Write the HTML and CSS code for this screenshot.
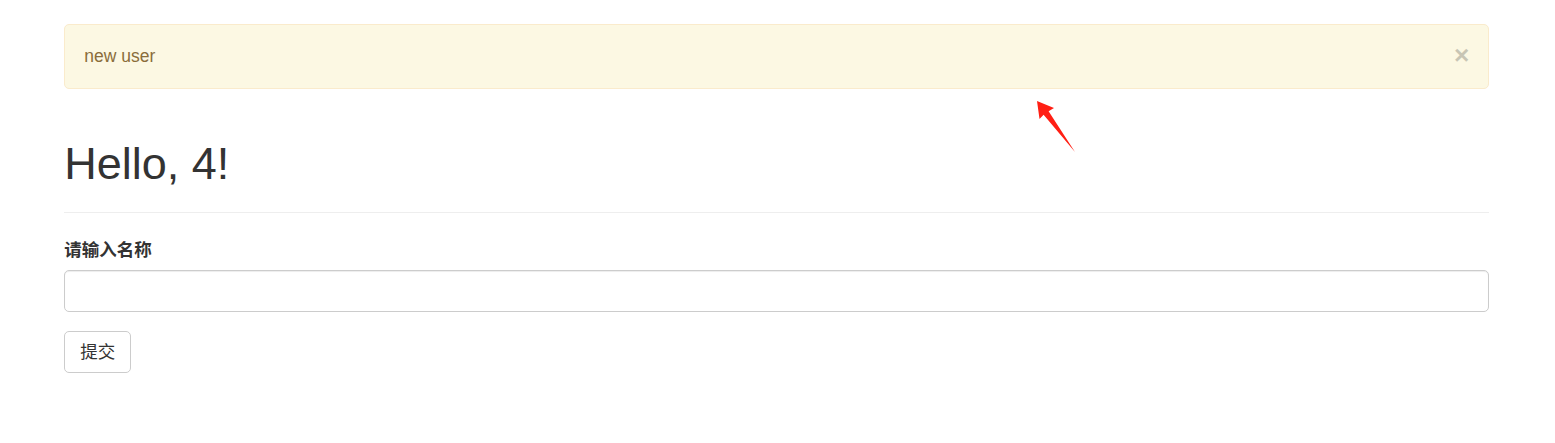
FILE: index.html
```html
<!DOCTYPE html>
<html lang="zh-CN">
<head>
<meta charset="utf-8">
<title>Hello</title>
<link rel="stylesheet" href="styles.css">
</head>
<body>
<div class="container">
  <div class="alert">
    <button type="button" class="close">×</button>
    new user
  </div>
  <div class="page-header">
    <h1>Hello, 4!</h1>
  </div>
  <form class="form">
    <div class="form-group">
      <label class="label" for="name">请输入名称</label>
      <input id="name" class="form-control" type="text">
    </div>
    <button type="submit" class="btn">提交</button>
  </form>
</div>
<svg class="annotation" width="1555" height="443" viewBox="0 0 1555 443">
  <polygon points="1037,101 1054,108 1048.6,111.2 1075,152 1043.6,114.8 1039.5,119" fill="#ff1f14"/>
</svg>
</body>
</html>
```

FILE: styles.css
```css
html, body {
  margin: 0;
  padding: 0;
  background: #fff;
}
body {
  font-family: "Liberation Sans", Arial, "Noto Sans CJK SC", sans-serif;
  font-size: 17.5px;
  line-height: 25px;
  color: #333;
  position: relative;
  min-height: 443px;
}
.container {
  max-width: 1462.5px;
  margin: 0 auto;
  padding: 24px 19.5px 0 18px;
  box-sizing: border-box;
}
.alert {
  background: #fcf8e3;
  border: 1px solid #faebcc;
  color: #8a6d3b;
  border-radius: 5px;
  padding: 19px 44px 19px 19px;
  margin-bottom: 25px;
}
.close {
  float: right;
  position: relative;
  top: -2.5px;
  right: -25px;
  padding: 0;
  margin: 0;
  border: 0;
  background: transparent;
  font-family: "Liberation Sans", Arial, sans-serif;
  font-size: 26.25px;
  font-weight: bold;
  line-height: 1;
  color: #000;
  opacity: 0.2;
  cursor: pointer;
}
.page-header {
  margin: 50px 0 25px;
  padding-bottom: 11.25px;
  border-bottom: 1px solid #eee;
}
.page-header h1 {
  margin: 25px 0 12.5px;
  font-size: 45px;
  font-weight: 500;
  line-height: 1.1;
  color: #333;
}
.form {
  margin: 0;
}
.form-group {
  margin-bottom: 18.75px;
}
.label {
  display: inline-block;
  margin-bottom: 6.25px;
  font-weight: bold;
  font-family: "Liberation Sans", "Noto Sans CJK SC", sans-serif;
}
.form-control {
  display: block;
  width: 100%;
  height: 42.5px;
  box-sizing: border-box;
  padding: 7.5px 15px;
  font-size: 17.5px;
  border: 1px solid #ccc;
  border-radius: 5px;
  box-shadow: inset 0 1px 1px rgba(0,0,0,.075);
  background: #fff;
  margin: 0;
}
.btn {
  display: inline-block;
  height: 42.5px;
  box-sizing: border-box;
  padding: 7.5px 15px;
  font-family: "Liberation Sans", "Noto Sans CJK SC", sans-serif;
  font-size: 17.5px;
  line-height: 25px;
  color: #333;
  background: #fff;
  border: 1px solid #ccc;
  border-radius: 5px;
  margin: 0;
}
.annotation {
  position: absolute;
  left: 0;
  top: 0;
  pointer-events: none;
}
```
